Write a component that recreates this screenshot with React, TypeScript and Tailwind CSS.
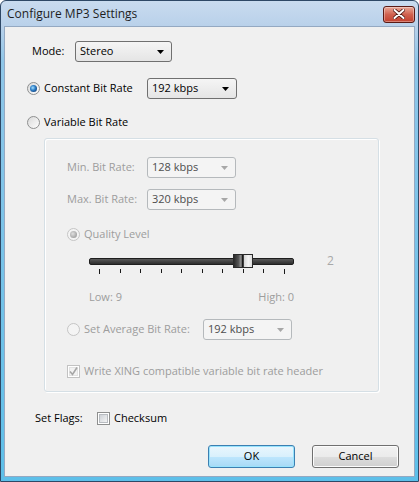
import React from 'react';

const Arrow: React.FC<{ disabled?: boolean }> = ({ disabled }) => (
  <svg width="7" height="4" viewBox="0 0 7 4">
    <path d="M0 0 H7 L3.5 4 Z" fill={disabled ? '#a7a7a7' : '#000'} />
  </svg>
);

const Dropdown: React.FC<{ value: string; width: string; disabled?: boolean }> = ({ value, width, disabled }) => (
  <div
    className={`${width} h-[21px] rounded-[3px] border flex items-center justify-between pl-[4px] pr-[7px] ${
      disabled
        ? 'border-[#b5b9bc] bg-[#f4f4f4] text-[#4d4d4d]'
        : 'border-[#707070] bg-gradient-to-b from-[#f5f5f5] to-[#e5e5e5] text-black'
    }`}
  >
    <span>{value}</span>
    <Arrow disabled={disabled} />
  </div>
);

const Radio: React.FC<{ checked?: boolean; disabled?: boolean }> = ({ checked, disabled }) => (
  <svg width="13" height="13" viewBox="0 0 13 13" className="shrink-0">
    <defs>
      <linearGradient id="rfill" x1="0" y1="0" x2="1" y2="1">
        <stop offset="0" stopColor="#d8d8d8" />
        <stop offset="1" stopColor="#ffffff" />
      </linearGradient>
      <radialGradient id="rdot" cx="0.4" cy="0.4" r="0.7">
        <stop offset="0" stopColor="#a6e0ff" />
        <stop offset="0.5" stopColor="#2f80c8" />
        <stop offset="1" stopColor="#0d3d7a" />
      </radialGradient>
      <radialGradient id="rgray" cx="0.4" cy="0.4" r="0.7">
        <stop offset="0" stopColor="#e0e0e0" />
        <stop offset="1" stopColor="#9a9a9a" />
      </radialGradient>
    </defs>
    <circle cx="6.5" cy="6.5" r="6" fill={disabled ? '#f4f4f4' : 'url(#rfill)'} stroke={disabled ? '#c4c4c4' : '#8e8f8f'} />
    {checked && <circle cx="6.5" cy="6.5" r="3.5" fill={disabled ? 'url(#rgray)' : 'url(#rdot)'} />}
  </svg>
);

const Checkbox: React.FC<{ checked?: boolean; disabled?: boolean }> = ({ checked, disabled }) => (
  <svg width="13" height="13" viewBox="0 0 13 13" className="shrink-0">
    <defs>
      <linearGradient id="cfill" x1="0" y1="0" x2="1" y2="1">
        <stop offset="0" stopColor="#cbcfd5" />
        <stop offset="1" stopColor="#f6f6f6" />
      </linearGradient>
    </defs>
    <rect x="0.5" y="0.5" width="12" height="12" fill="#fff" stroke={disabled ? '#c2c2c2' : '#8e8f8f'} />
    <rect x="2.5" y="2.5" width="8" height="8" fill={disabled ? '#f2f2f2' : 'url(#cfill)'} stroke={disabled ? '#e2e2e2' : '#b8bcc1'} />
    {checked && <path d="M3 6.5 L5.5 9.5 L10 2.5" fill="none" stroke={disabled ? '#a6a6a6' : '#333'} strokeWidth="1.6" />}
  </svg>
);

const ticks = [10, 31, 51, 72, 92, 113, 133, 154, 174, 195];

const App: React.FC = () => {
  return (
    <div className="w-[419px] h-[482px] flex flex-col rounded-t-[6px] border border-[#2e4866] bg-[linear-gradient(180deg,#c9dbef_0px,#b9d1ea_25px,#8fc6e8_60px,#5dbfe9_100%)] font-['Open_Sans',sans-serif] text-[11px] text-black select-none">
      {/* title bar */}
      <div className="h-[25px] flex items-center justify-between pl-[6px] pr-[3px] shrink-0">
        <span className="text-[12px] text-[#1e1e1e]">Configure MP3 Settings</span>
        <div className="w-[32px] h-[17px] mt-[1px] rounded-[3px] border border-[#5a1a14] bg-gradient-to-b from-[#e8a797] via-[#d0614f] to-[#c23f2d] flex items-center justify-center shadow-[inset_0_0_0_1px_rgba(255,255,255,0.35)]">
          <svg width="12" height="10" viewBox="0 0 12 10">
            <path d="M1.5 1 L10.5 9 M10.5 1 L1.5 9" stroke="#4a1410" strokeWidth="3.6" strokeLinecap="round" />
            <path d="M1.5 1 L10.5 9 M10.5 1 L1.5 9" stroke="#fff" strokeWidth="2" strokeLinecap="round" />
          </svg>
        </div>
      </div>

      {/* client area */}
      <div className="mx-[3px] mb-[4px] flex-1 bg-[#f0f0f0] border border-[#94a9c2] flex flex-col">
        {/* Mode */}
        <div className="mt-[14px] h-[21px] pl-[27px] flex items-center">
          <span className="w-[43px]">Mode:</span>
          <Dropdown value="Stereo" width="w-[97px]" />
        </div>

        {/* Constant */}
        <div className="mt-[16px] h-[21px] pl-[22px] flex items-center">
          <div className="w-[120px] flex items-center gap-[4px]">
            <Radio checked />
            <span>Constant Bit Rate</span>
          </div>
          <Dropdown value="192 kbps" width="w-[90px]" />
        </div>

        {/* Variable */}
        <div className="mt-[13px] h-[20px] pl-[22px] flex items-center gap-[4px]">
          <Radio />
          <span>Variable Bit Rate</span>
        </div>

        {/* Group */}
        <div className="mt-[6px] ml-[39px] w-[335px] h-[254px] rounded-[3px] border border-[#d5dfe5] shadow-[inset_1px_1px_0_#fff,1px_1px_0_#fff] flex flex-col text-[#9d9d9d]">
          <div className="mt-[18px] h-[21px] pl-[22px] flex items-center">
            <span className="w-[80px]">Min. Bit Rate:</span>
            <Dropdown value="128 kbps" width="w-[89px]" disabled />
          </div>
          <div className="mt-[11px] h-[21px] pl-[22px] flex items-center">
            <span className="w-[80px]">Max. Bit Rate:</span>
            <Dropdown value="320 kbps" width="w-[89px]" disabled />
          </div>
          <div className="mt-[16px] h-[16px] pl-[22px] flex items-center gap-[4px]">
            <Radio checked disabled />
            <span>Quality Level</span>
          </div>

          {/* slider */}
          <div className="mt-[12px] pl-[44px] flex">
            <div className="w-[205px] flex flex-col">
              <div className="relative h-[14px] flex items-center">
                <div className="w-full h-[7px] rounded-[2px] border border-[#1e1e1e] bg-gradient-to-b from-[#5a5a5a] to-[#2e2e2e]" />
                <div className="absolute left-[144px] top-0 w-[20px] h-[14px] border border-[#2a2a2a] bg-[linear-gradient(90deg,#2a2a2a_0%,#555_25%,#9a9a9a_40%,#1a1a1a_45%,#1a1a1a_52%,#d6d6d6_56%,#f4f4f4_80%,#dcdcdc_100%)]" />
              </div>
              <svg width="205" height="5" viewBox="0 0 205 5" className="mt-[1px]">
                {ticks.map((t, i) => (
                  <rect key={t} x={t} y="0" width="1" height={i === 0 || i === ticks.length - 1 ? 5 : 4} fill="#1a1a1a" />
                ))}
              </svg>
            </div>
            <span className="ml-[33px] h-[14px] leading-[14px] text-[12px] text-[#a8a8a8]">2</span>
          </div>

          <div className="mt-[16px] h-[14px] pl-[44px] w-[249px] flex items-center justify-between">
            <span>Low: 9</span>
            <span>High: 0</span>
          </div>

          <div className="mt-[15px] h-[21px] pl-[22px] flex items-center">
            <div className="w-[136px] flex items-center gap-[4px]">
              <Radio disabled />
              <span>Set Average Bit Rate:</span>
            </div>
            <Dropdown value="192 kbps" width="w-[89px]" disabled />
          </div>

          <div className="mt-[23px] h-[16px] pl-[22px] flex items-center gap-[4px]">
            <Checkbox checked disabled />
            <span>Write XING compatible variable bit rate header</span>
          </div>
        </div>

        {/* Set flags */}
        <div className="mt-[19px] h-[14px] pl-[30px] flex items-center">
          <span className="w-[62px]">Set Flags:</span>
          <Checkbox />
          <span className="ml-[4px]">Checksum</span>
        </div>

        {/* Buttons */}
        <div className="mt-[20px] pr-[15px] flex justify-end gap-[17px]">
          <button className="w-[87px] h-[23px] rounded-[3px] border border-[#3c7fb1] bg-[linear-gradient(180deg,#eaf6fd_0%,#d9f0fc_50%,#bee6fd_51%,#a7d9f5_100%)] shadow-[inset_0_0_0_1px_#98e3fd]">
            OK
          </button>
          <button className="w-[87px] h-[23px] rounded-[3px] border border-[#707070] bg-[linear-gradient(180deg,#f2f2f2_0%,#ebebeb_50%,#dddddd_51%,#cfcfcf_100%)] shadow-[inset_0_0_0_1px_#fcfcfc]">
            Cancel
          </button>
        </div>
      </div>
    </div>
  );
};

export default App;
